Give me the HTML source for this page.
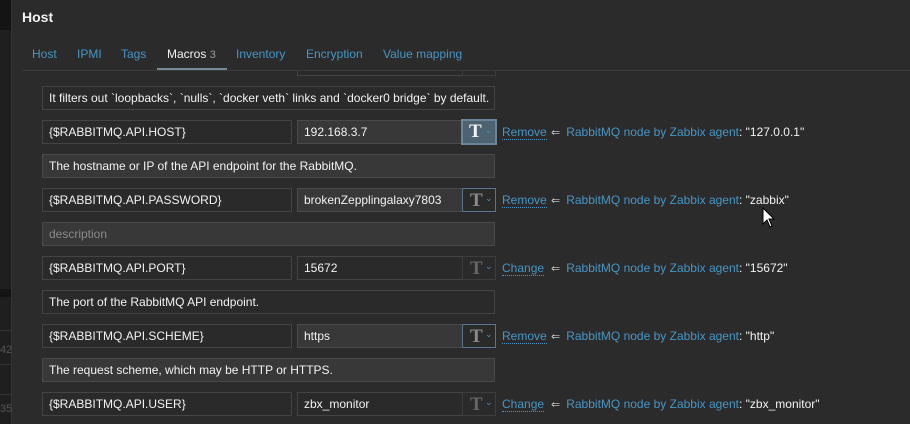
<!DOCTYPE html>
<html><head><style>
*{box-sizing:border-box;margin:0;padding:0}
body{width:910px;height:424px;background:#2b2b2b;font-family:"Liberation Sans",Arial,sans-serif;font-size:12px;color:#f2f2f2;position:relative;overflow:hidden}
.abs{position:absolute}
.left{left:0;top:0;width:11px;height:424px;background:#1f1f1f}
.inp{position:absolute;height:24px;border:1px solid #444;background:#2a2a2a;padding:0 6px;line-height:22px;white-space:nowrap;overflow:hidden;color:#f2f2f2}
.ed{background:#383838;border-color:#4a4a4a}
.btn{position:absolute;width:34px;height:24px;border:1px solid #3d3d3d;background:#2a2a2a}
.btn b{position:absolute;left:7px;top:1px;font-family:"Liberation Serif",serif;font-size:19px;color:#8a8a8a;font-weight:bold}
.btn i{position:absolute;left:22px;top:4px;font-style:normal;font-size:9px;color:#4796c4}
.btn.act{border-color:#5a7585}
.btn.sel{background:#4d6372;border:2px solid #6a8597}
.btn.sel b{color:#f2f2f2;left:6px;top:0}
.lnk{position:absolute;color:#4796c4;line-height:16px;white-space:nowrap}
.lnk .l{display:inline-block;width:45px}
.lnk u{text-decoration:none;border-bottom:1px dotted #4796c4}
.lnk .w{color:#f2f2f2}
.lnk .a{color:#ccc;font-size:11px;margin:0 6px 0 4px}
.tab{position:absolute;top:47px;color:#4796c4;font-size:12px}
</style></head><body>
<div class="abs left"></div>
<div class="abs" style="left:0;top:0;width:11px;height:30px;background:#141414"></div>
<div class="abs" style="left:0;top:289px;width:11px;height:8px;background:#141414"></div>
<div class="abs" style="left:0;top:330px;width:11px;height:1px;background:#333"></div>
<div class="abs" style="left:0;top:364px;width:11px;height:1px;background:#333"></div>
<div class="abs" style="left:0;top:394px;width:11px;height:1px;background:#333"></div>
<div class="abs" style="left:11px;top:0;width:1px;height:424px;background:#333"></div>
<div class="abs" style="left:22px;top:9px;font-size:14px;font-weight:bold;color:#f2f2f2">Host</div>
<div class="tab" style="left:32px">Host</div>
<div class="tab" style="left:77px">IPMI</div>
<div class="tab" style="left:121px">Tags</div>
<div class="tab" style="left:167px;color:#f2f2f2">Macros <span style="color:#999;font-size:11px">3</span></div>
<div class="abs" style="left:157px;top:68px;width:70px;height:3px;background:#768d99"></div>
<div class="tab" style="left:236px">Inventory</div>
<div class="tab" style="left:306px">Encryption</div>
<div class="tab" style="left:383px">Value mapping</div>
<div class="abs" style="left:22px;top:70px;width:888px;height:1px;background:#3a3a3a"></div>
<div class="inp" style="left:297px;top:71px;width:166px;border-top:none;height:5px"></div>
<div class="btn" style="left:462px;top:71px;border-top:none;height:5px"></div>

<div class="inp" style="left:42px;top:86px;width:453px">It filters out `loopbacks`, `nulls`, `docker veth` links and `docker0 bridge` by default.</div>

<div class="inp" style="left:42px;top:120px;width:250px">{$RABBITMQ.API.HOST}</div>
<div class="inp ed" style="left:297px;top:120px;width:166px">192.168.3.7</div>
<div class="btn sel" style="left:461px;top:119px;width:36px;height:26px"><b>T</b><i>⌄</i></div>
<div class="lnk" style="left:502px;top:124px"><span class="l"><u>Remove</u></span><span class="a">⇐</span>RabbitMQ node by Zabbix agent<span class="w">: "127.0.0.1"</span></div>

<div class="inp ed" style="left:42px;top:154px;width:453px">The hostname or IP of the API endpoint for the RabbitMQ.</div>

<div class="inp" style="left:42px;top:188px;width:250px">{$RABBITMQ.API.PASSWORD}</div>
<div class="inp ed" style="left:297px;top:188px;width:166px">brokenZepplingalaxy7803</div>
<div class="btn act" style="left:462px;top:188px"><b>T</b><i>⌄</i></div>
<div class="lnk" style="left:502px;top:192px"><span class="l"><u>Remove</u></span><span class="a">⇐</span>RabbitMQ node by Zabbix agent<span class="w">: "zabbix"</span></div>
<svg class="abs" style="left:762px;top:207px" width="14" height="22" viewBox="0 0 14 22"><path d="M1 1 L1 17 L5 13 L8 20 L10 19 L7 12 L12 12 Z" fill="#fff" stroke="#000" stroke-width="1"/></svg>

<div class="inp ed" style="left:42px;top:222px;width:453px;color:#8a8a8a">description</div>

<div class="inp" style="left:42px;top:256px;width:250px">{$RABBITMQ.API.PORT}</div>
<div class="inp" style="left:297px;top:256px;width:166px">15672</div>
<div class="btn" style="left:462px;top:256px"><b style="color:#666">T</b><i>⌄</i></div>
<div class="lnk" style="left:502px;top:260px"><span class="l"><u>Change</u></span><span class="a">⇐</span>RabbitMQ node by Zabbix agent<span class="w">: "15672"</span></div>

<div class="inp" style="left:42px;top:290px;width:453px">The port of the RabbitMQ API endpoint.</div>

<div class="inp" style="left:42px;top:324px;width:250px">{$RABBITMQ.API.SCHEME}</div>
<div class="inp ed" style="left:297px;top:324px;width:166px">https</div>
<div class="btn act" style="left:462px;top:324px"><b>T</b><i>⌄</i></div>
<div class="lnk" style="left:502px;top:328px"><span class="l"><u>Remove</u></span><span class="a">⇐</span>RabbitMQ node by Zabbix agent<span class="w">: "http"</span></div>

<div class="inp ed" style="left:42px;top:358px;width:453px">The request scheme, which may be HTTP or HTTPS.</div>

<div class="inp" style="left:42px;top:392px;width:250px">{$RABBITMQ.API.USER}</div>
<div class="inp" style="left:297px;top:392px;width:166px">zbx_monitor</div>
<div class="btn" style="left:462px;top:392px"><b style="color:#666">T</b><i>⌄</i></div>
<div class="lnk" style="left:502px;top:396px"><span class="l"><u>Change</u></span><span class="a">⇐</span>RabbitMQ node by Zabbix agent<span class="w">: "zbx_monitor"</span></div>

<div class="abs" style="left:0;top:344px;font-size:11px;color:#555">42</div>
<div class="abs" style="left:0;top:403px;font-size:11px;color:#555">35</div>
</body></html>
